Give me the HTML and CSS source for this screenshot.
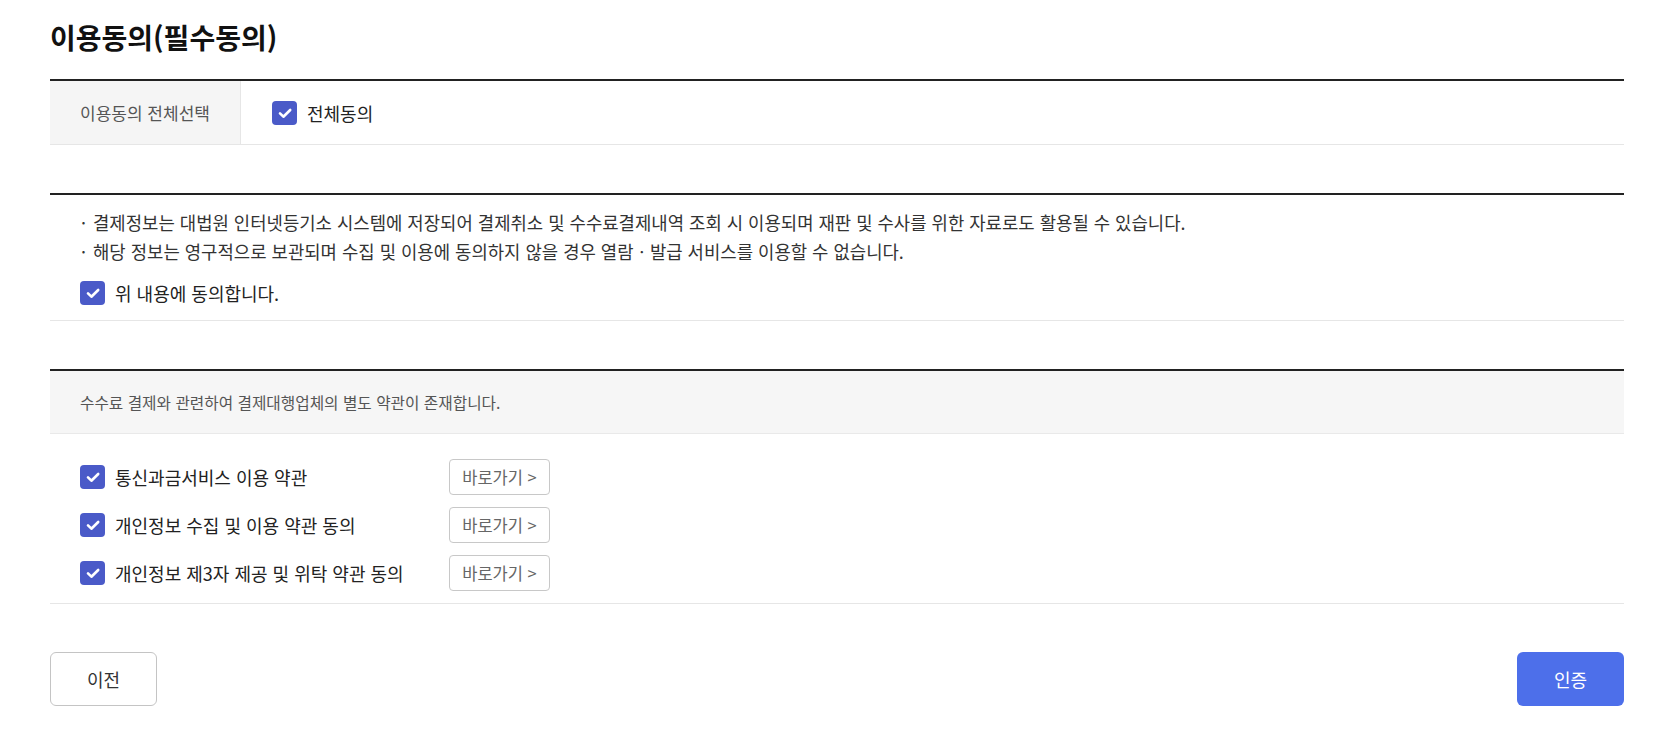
FILE: index.html
```html
<!DOCTYPE html>
<html lang="ko">
<head>
<meta charset="utf-8">
<title>이용동의</title>
<link rel="stylesheet" href="styles.css">
</head>
<body>
<div class="page">
  <h1 class="title">이용동의(필수동의)</h1>

  <div class="all-row">
    <div class="all-label">이용동의 전체선택</div>
    <div class="all-value">
      <label class="check">
        <span class="box"><svg viewBox="0 0 24 24"><path d="M7 12.3l3.4 3.4L17.2 9" /></svg></span>
        <span class="check-text">전체동의</span>
      </label>
    </div>
  </div>

  <div class="section notice">
    <p class="bullet"><span class="dot">·</span>결제정보는 대법원 인터넷등기소 시스템에 저장되어 결제취소 및 수수료결제내역 조회 시 이용되며 재판 및 수사를 위한 자료로도 활용될 수 있습니다.</p>
    <p class="bullet"><span class="dot">·</span>해당 정보는 영구적으로 보관되며 수집 및 이용에 동의하지 않을 경우 열람ㆍ발급 서비스를 이용할 수 없습니다.</p>
    <label class="check agree">
      <span class="box"><svg viewBox="0 0 24 24"><path d="M7 12.3l3.4 3.4L17.2 9" /></svg></span>
      <span class="check-text">위 내용에 동의합니다.</span>
    </label>
  </div>

  <div class="section terms">
    <div class="terms-head">수수료 결제와 관련하여 결제대행업체의 별도 약관이 존재합니다.</div>
    <div class="terms-list">
      <div class="term-row">
        <label class="check">
          <span class="box"><svg viewBox="0 0 24 24"><path d="M7 12.3l3.4 3.4L17.2 9" /></svg></span>
          <span class="check-text">통신과금서비스 이용 약관</span>
        </label>
        <button class="link-btn" type="button">바로가기 &gt;</button>
      </div>
      <div class="term-row">
        <label class="check">
          <span class="box"><svg viewBox="0 0 24 24"><path d="M7 12.3l3.4 3.4L17.2 9" /></svg></span>
          <span class="check-text">개인정보 수집 및 이용 약관 동의</span>
        </label>
        <button class="link-btn" type="button">바로가기 &gt;</button>
      </div>
      <div class="term-row">
        <label class="check">
          <span class="box"><svg viewBox="0 0 24 24"><path d="M7 12.3l3.4 3.4L17.2 9" /></svg></span>
          <span class="check-text">개인정보 제3자 제공 및 위탁 약관 동의</span>
        </label>
        <button class="link-btn" type="button">바로가기 &gt;</button>
      </div>
    </div>
  </div>

  <div class="actions">
    <button class="btn btn-prev" type="button">이전</button>
    <button class="btn btn-ok" type="button">인증</button>
  </div>
</div>
</body>
</html>
```

FILE: styles.css
```css
* { box-sizing: border-box; }
html, body { margin: 0; padding: 0; background: #fff; }
body {
  font-family: "Noto Sans CJK KR", "Noto Sans", sans-serif;
  color: #222;
}
.page {
  width: 1574px;
  margin-left: 50px;
  padding-top: 17px;
}
.title {
  margin: 0;
  font-size: 28px;
  font-weight: 700;
  line-height: 40px;
  color: #111;
}
.all-row {
  margin-top: 22px;
  display: flex;
  border-top: 2px solid #222;
  border-bottom: 1px solid #e6e6e6;
  height: 66px;
}
.all-label {
  width: 191px;
  background: #f5f5f5;
  border-right: 1px solid #e6e6e6;
  display: flex;
  align-items: center;
  justify-content: center;
  font-size: 17px;
  color: #555;
}
.all-value {
  display: flex;
  align-items: center;
  padding-left: 31px;
}
.check {
  display: flex;
  align-items: center;
  gap: 10px;
  cursor: pointer;
}
.box {
  width: 25px;
  height: 24px;
  border-radius: 4px;
  background: #4a5ac8;
  display: flex;
  align-items: center;
  justify-content: center;
  flex: none;
}
.box svg {
  width: 24px;
  height: 24px;
  fill: none;
  stroke: #fff;
  stroke-width: 2.6;
  stroke-linecap: round;
  stroke-linejoin: round;
}
.check-text {
  font-size: 18px;
  color: #222;
}
.section {
  margin-top: 48px;
  border-top: 2px solid #222;
  border-bottom: 1px solid #e6e6e6;
}
.notice {
  padding: 13px 0 14px 30px;
}
.bullet {
  margin: 0;
  font-size: 17.8px;
  line-height: 29px;
  color: #333;
}
.dot {
  display: inline-block;
  width: 13px;
  padding-left: 1px;
}
.agree {
  margin-top: 14px;
}
.terms-head {
  height: 63px;
  background: #f6f6f6;
  border-bottom: 1px solid #e9e9e9;
  display: flex;
  align-items: center;
  padding-left: 30px;
  font-size: 15.7px;
  color: #555;
}
.terms-list {
  padding: 25px 0 12px 30px;
  display: flex;
  flex-direction: column;
  gap: 12px;
}
.term-row {
  display: grid;
  grid-template-columns: 369px auto;
  align-items: center;
  height: 36px;
}
.link-btn {
  width: 101px;
  height: 36px;
  background: #fff;
  border: 1px solid #c8c8c8;
  border-radius: 4px;
  font-family: inherit;
  font-size: 16.5px;
  color: #666;
  padding: 0;
  justify-self: start;
}
.actions {
  margin-top: 48px;
  display: flex;
  justify-content: space-between;
}
.btn {
  width: 107px;
  height: 54px;
  border-radius: 6px;
  font-family: inherit;
  font-size: 18px;
  padding: 0;
}
.btn-prev {
  background: #fff;
  border: 1px solid #c4c4c4;
  color: #333;
}
.btn-ok {
  background: #4d6fea;
  border: none;
  color: #fff;
}
```
